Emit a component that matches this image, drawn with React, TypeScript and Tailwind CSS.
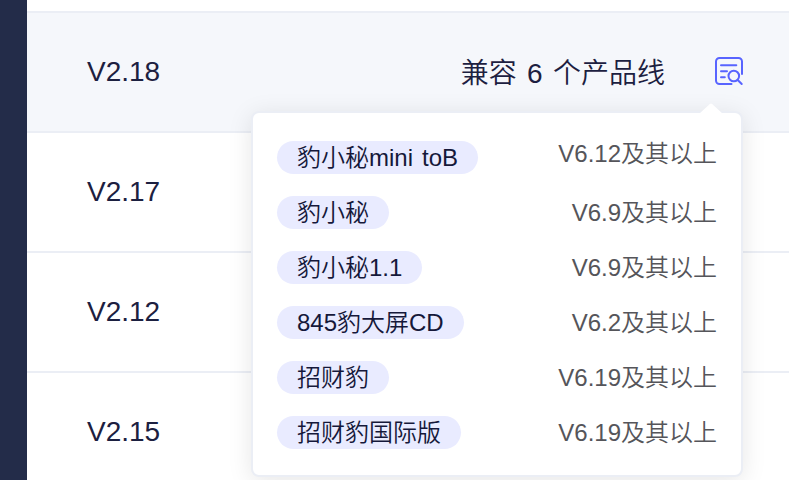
const versions = ["V2.18", "V2.17", "V2.12", "V2.15"];

const products = [
  { name: "豹小秘mini toB", version: "V6.12及其以上" },
  { name: "豹小秘", version: "V6.9及其以上" },
  { name: "豹小秘1.1", version: "V6.9及其以上" },
  { name: "845豹大屏CD", version: "V6.2及其以上" },
  { name: "招财豹", version: "V6.19及其以上" },
  { name: "招财豹国际版", version: "V6.19及其以上" },
];

function DetailIcon() {
  return (
    <svg className="h-[30px] w-[30px] shrink-0" viewBox="0 0 30 30" fill="none" stroke="#5864ff" strokeWidth="2" strokeLinecap="round" strokeLinejoin="round">
      <path d="M17.5 27H5.5A3.5 3.5 0 0 1 2 23.5V4.5A3.5 3.5 0 0 1 5.5 1H24.5A3.5 3.5 0 0 1 28 4.5V17" />
      <path d="M7 8.3H22.3M7 14.2H13M7 20.2H10.8" />
      <circle cx="19.8" cy="19" r="5.3" />
      <path d="M23.7 23L27.7 27" />
    </svg>
  );
}

function ProductPopover() {
  return (
    <div className="absolute left-[251px] top-[111px] h-[366px] w-[492px] rounded-lg border-2 border-[#ebeef5] bg-white px-6 pt-7 shadow-[0_4px_24px_rgba(0,0,0,0.1)]">
      <svg className="absolute -top-[10px] right-[18px] h-[11px] w-6" viewBox="0 0 24 11">
        <path d="M0 11L10.6 1.2Q12 0 13.4 1.2L24 11Z" fill="#fff" />
      </svg>
      <ul className="flex flex-col gap-[22px] text-2xl leading-[33px]">
        {products.map((product, index) => (
          <li key={product.name} className="flex h-[33px] justify-between whitespace-nowrap">
            <span className="rounded-full bg-[#e9ebff] px-5 text-[#15183a] [word-spacing:2.4px]">{product.name}</span>
            <span className={`text-[#55555a] ${index === 0 ? "-mt-1" : ""}`}>{product.version}</span>
          </li>
        ))}
      </ul>
    </div>
  );
}

export default function App() {
  return (
    <div className="relative flex h-[480px] w-[789px] overflow-hidden bg-white font-['Liberation_Sans','Noto_Sans_CJK_SC',sans-serif] font-[350]">
      <aside className="w-[27px] shrink-0 bg-[#232c49]" />
      <main className="flex-1 pt-[11px]">
        <div className="border-t-2 border-[#ebeef5]">
          {versions.map((version, index) => (
            <div
              key={version}
              className={`flex h-[120px] items-center border-b-2 border-[#ebeef5] pl-[60px] pr-[45px] text-[28px] leading-10 text-[#1c2040] ${index === 0 ? "bg-[#f5f7fb]" : "bg-white"}`}
            >
              <span>{version}</span>
              {index === 0 && (
                <div className="ml-auto flex items-center gap-[49px]">
                  <span className="whitespace-nowrap pt-[3px] [word-spacing:2.6px]">兼容 6 个产品线</span>
                  <DetailIcon />
                </div>
              )}
            </div>
          ))}
        </div>
      </main>
      <ProductPopover />
    </div>
  );
}
